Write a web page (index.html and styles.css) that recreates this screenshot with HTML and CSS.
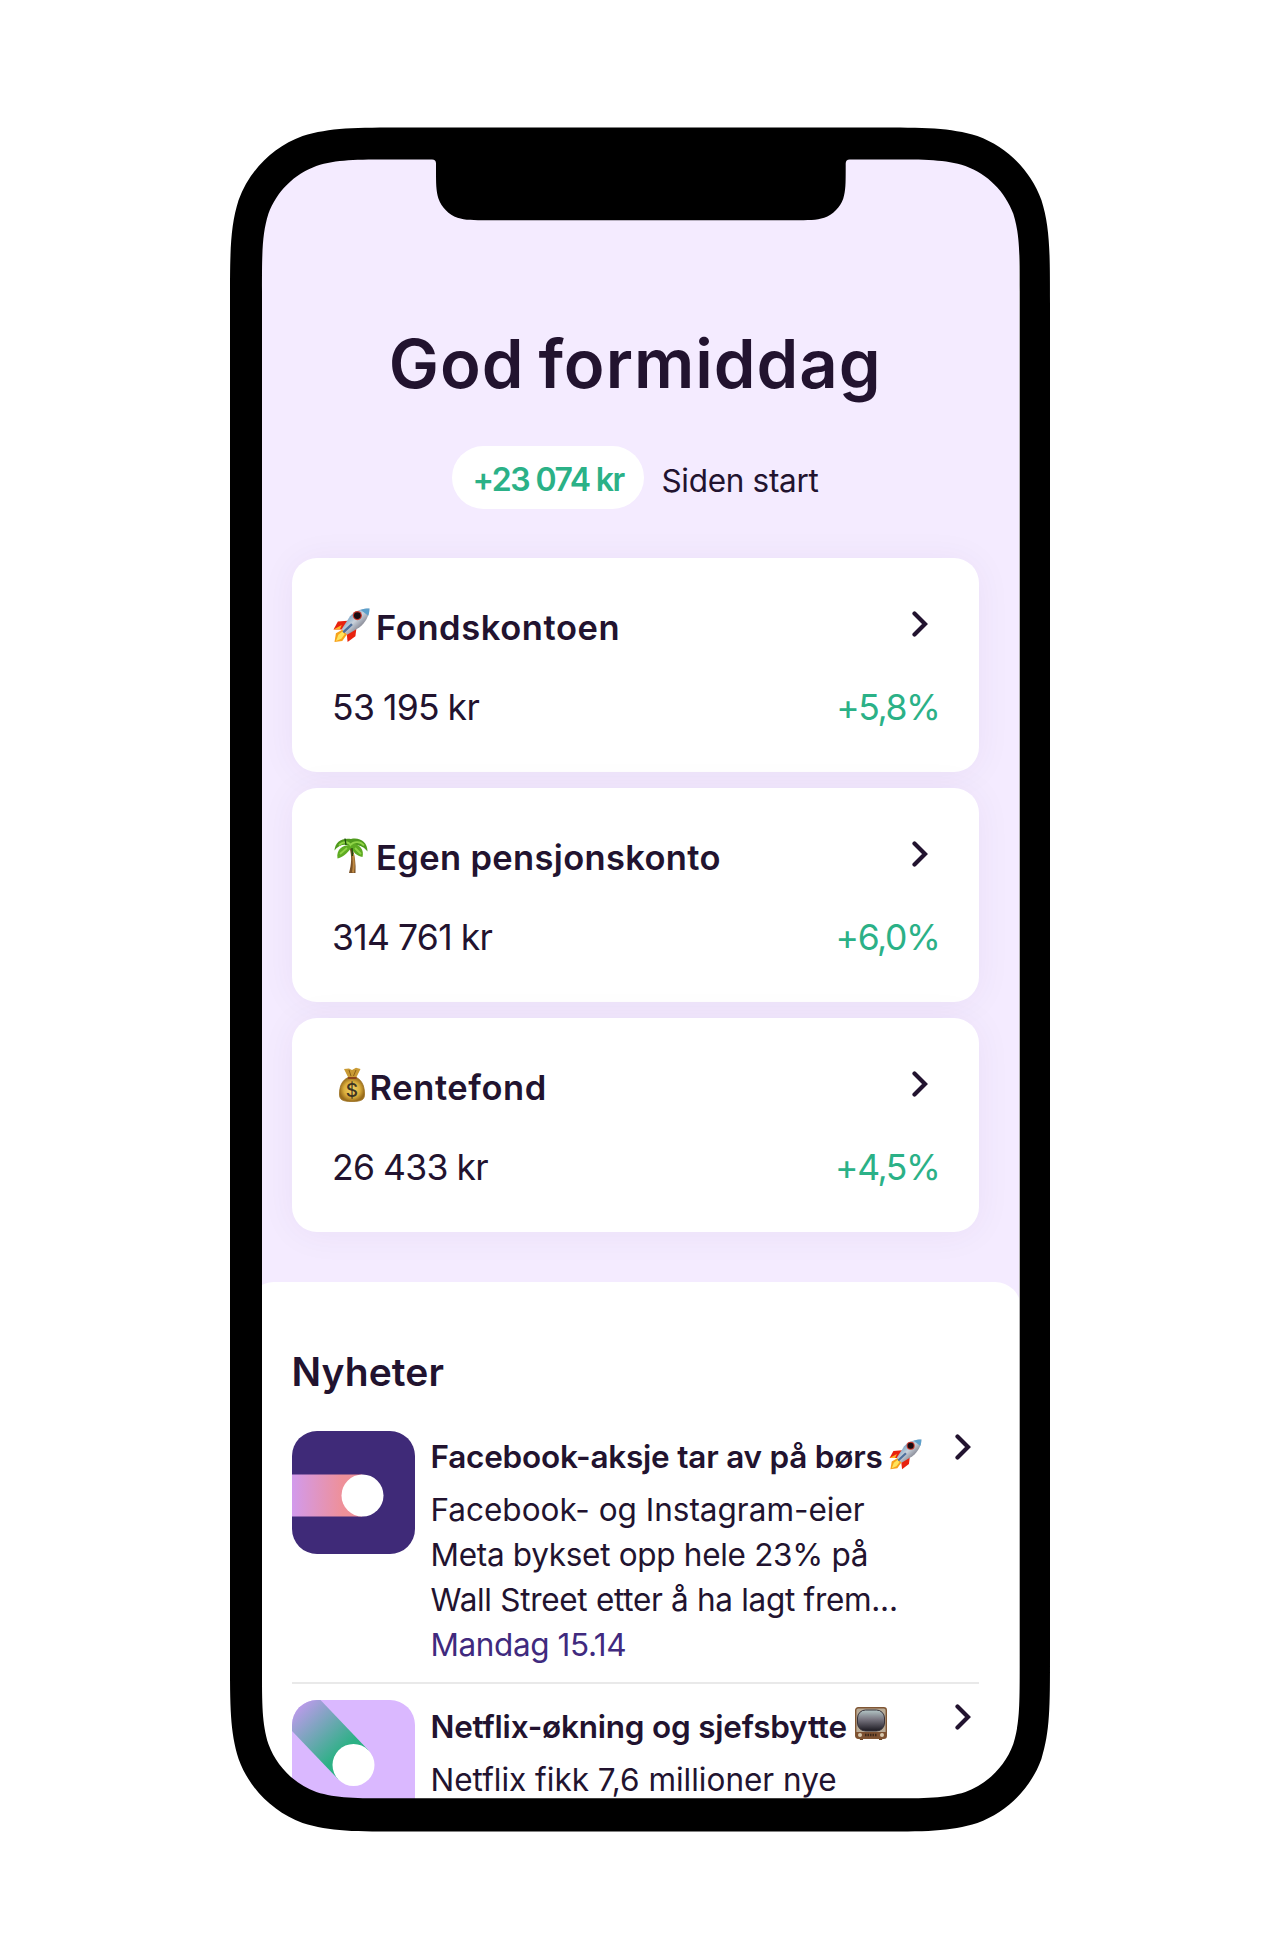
FILE: index.html
```html
<!DOCTYPE html>
<html lang="no">
<head>
  <meta charset="UTF-8">
  <title>God formiddag</title>
  <link rel="stylesheet" href="styles.css">
</head>
<body>
  <svg class="defs" width="0" height="0">
    <symbol id="chevron" viewBox="0 0 16 26">
      <path d="M2.5 2.5 L13 13 L2.5 23.5" fill="none" stroke="#22132f" stroke-width="4.2" stroke-linecap="round" stroke-linejoin="miter"/>
    </symbol>
    <symbol id="rocket" viewBox="0 0 38 36">
      <defs>
        <linearGradient id="hull" x1="0.2" y1="0.2" x2="0.8" y2="0.8">
          <stop offset="0" stop-color="#5f93bd"/>
          <stop offset="0.45" stop-color="#c9d2dc"/>
          <stop offset="1" stop-color="#6c6a76"/>
        </linearGradient>
      </defs>
      <path d="M15 13 L5 14 L0.5 22 L11 22 Z" fill="#e8220f"/>
      <path d="M24 21 L23 29 L15 35 L14 26 Z" fill="#e8220f"/>
      <path d="M0.5 22 L9 17.5 L7 22 Z" fill="#ffb42a"/>
      <path d="M10 22 L3 26 L1.5 35 L9.5 34 L14.5 27 Z" fill="#f7a21b"/>
      <path d="M10 24 L5.5 27.5 L3 34 L8.5 31.5 L12 27 Z" fill="#ffe45c"/>
      <path d="M37.5 0.5 C29 0.5 22 3 17.5 8.5 L9 21.5 L14.5 27.5 L27 20 C34 14.5 37 8 37.5 0.5 Z" fill="url(#hull)"/>
      <path d="M37.5 0.5 C34 0.5 31 1 28.5 2 L36.3 8 C37 5.5 37.5 3 37.5 0.5 Z" fill="#5da0cb"/>
      <path d="M19.5 16.5 L10.5 25" stroke="#4c6f9d" stroke-width="2.5"/>
      <circle cx="25" cy="7.8" r="4.7" fill="#c8362b"/>
      <circle cx="25" cy="7.8" r="3.5" fill="#170a12"/>
    </symbol>
  </svg>

  <div class="phone">
    <div class="screen">
      <main class="hero">
        <h1>God formiddag</h1>
        <div class="summary">
          <span class="pill">+23 074 kr</span>
          <span class="since">Siden start</span>
        </div>

        <div class="accounts">
          <div class="card">
            <div class="card-top">
              <h2><svg class="rocket"><use href="#rocket"/></svg>Fondskontoen</h2>
              <svg class="chevron"><use href="#chevron"/></svg>
            </div>
            <div class="card-bottom">
              <span class="amount">53 195 kr</span>
              <span class="percent">+5,8%</span>
            </div>
          </div>

          <div class="card">
            <div class="card-top">
              <h2 class="long">
                <svg class="palm" viewBox="0 0 34 37">
                  <path d="M18 10 C21 18 22 27 21.5 36 L15 36 C17.5 27 18 19 15.5 11 Z" fill="#7a5126"/>
                  <path d="M19 17 C20 24 20 30 19 35.5" fill="none" stroke="#c08a42" stroke-width="2"/>
                  <path d="M17 11 C14 6 5 7 0.5 13.5 C1 5 8 0.5 17 2 C26 0 33.5 5 33.5 14.5 C29 8 20 6 17 11 Z" fill="#4f9a1d"/>
                  <path d="M16 8 C9 8 2 12 3.500 21.500 C8 20.500 13.500 16.500 17 11 C19 15 23 19 28.500 20 C30.500 13 26 7 17 6 Z" fill="#5eab22"/>
                  <path d="M5 8.5 C9 3.5 15 5 16.5 8 C20 3.5 27 4.5 30 8.5 M6 17 L13 11 M21 11 L27 17" fill="none" stroke="#8fd447" stroke-width="1.8"/>
                  <path d="M11 1.500 L12 8 M18 11 L18.500 19" stroke="#1d4a0c" stroke-width="1.3"/>
                </svg>Egen pensjonskonto
              </h2>
              <svg class="chevron"><use href="#chevron"/></svg>
            </div>
            <div class="card-bottom">
              <span class="amount">314 761 kr</span>
              <span class="percent">+6,0%</span>
            </div>
          </div>

          <div class="card">
            <div class="card-top">
              <h2>
                <svg class="bag" viewBox="0 0 26 35">
                  <defs>
                    <radialGradient id="gold">
                      <stop offset="0" stop-color="#f5d768"/>
                      <stop offset="0.65" stop-color="#d9ad3c"/>
                      <stop offset="1" stop-color="#9a6d1c"/>
                    </radialGradient>
                  </defs>
                  <path d="M5 2 L10 1.5 L13 3 L17 0.8 L21.5 2 L17 11 L9.5 11 Z" fill="#c99a34"/>
                  <path d="M10 3 L12 9 M17 3 L14.5 9" stroke="#8a5f18" stroke-width="1"/>
                  <path d="M9 10.5 C3 13.5 0.5 19 0.5 27 C0.5 32.5 3 34.5 13 34.5 C23 34.5 25.5 32.5 25.5 27 C25.5 19 23 13.5 17.5 10.5 Z" fill="url(#gold)" stroke="#9a6d1c" stroke-width="0.8"/>
                  <path d="M9 11 H17.5" stroke="#8c3f1c" stroke-width="1.8"/>
                  <text class="dollar" x="13" y="29.5">$</text>
                </svg>Rentefond
              </h2>
              <svg class="chevron"><use href="#chevron"/></svg>
            </div>
            <div class="card-bottom">
              <span class="amount">26 433 kr</span>
              <span class="percent">+4,5%</span>
            </div>
          </div>
        </div>
      </main>

      <section class="news">
        <h2>Nyheter</h2>

        <article class="item">
          <svg class="thumb" viewBox="0 0 123 123">
            <defs>
              <linearGradient id="pink">
                <stop offset="0" stop-color="#d29aec"/>
                <stop offset="0.72" stop-color="#ee9099"/>
              </linearGradient>
            </defs>
            <rect width="123" height="123" fill="#3f2a78"/>
            <rect y="43.5" width="70" height="42" fill="url(#pink)"/>
            <circle cx="70.5" cy="64.5" r="21" fill="#fff"/>
          </svg>
          <div class="text">
            <h3>Facebook-aksje tar av på børs<svg class="rocket"><use href="#rocket"/></svg></h3>
            <p>
              Facebook- og Instagram-eier<br>
              <span class="tight">Meta bykset opp hele 23% på</span><br>
              <span class="tight">Wall Street etter å ha lagt frem...</span>
            </p>
            <time>Mandag 15.14</time>
          </div>
          <svg class="chevron"><use href="#chevron"/></svg>
        </article>

        <article class="item">
          <svg class="thumb" viewBox="0 0 123 123">
            <defs>
              <linearGradient id="green" gradientUnits="userSpaceOnUse" x1="8" y1="8" x2="50" y2="52">
                <stop offset="0" stop-color="#b59ce6"/>
                <stop offset="1" stop-color="#2cb185"/>
              </linearGradient>
            </defs>
            <rect width="123" height="123" fill="#dab8ff"/>
            <path d="M0 0 H28.5 L76.7 50.5 L46.4 79.5 L0 31 Z" fill="url(#green)"/>
            <circle cx="61.5" cy="65" r="21" fill="#fff"/>
          </svg>
          <div class="text">
            <h3>Netflix-økning og sjefsbytte<svg class="tv" viewBox="0 0 32 33">
              <defs>
                <linearGradient id="glass" x1="0" y1="0" x2="0" y2="1">
                  <stop offset="0" stop-color="#b4c6c6"/>
                  <stop offset="0.45" stop-color="#77747f"/>
                  <stop offset="1" stop-color="#1c1a22"/>
                </linearGradient>
              </defs>
              <path d="M4 30 H8 V33 H5 Z M24 30 H28 L27 33 H24 Z" fill="#6b4526"/>
              <rect x="0.7" y="0.7" width="30.6" height="30.6" rx="2.5" fill="#b9ab97" stroke="#805634" stroke-width="1.4"/>
              <rect x="1" y="25" width="30" height="6" fill="#7d5131"/>
              <rect x="2.5" y="3" width="27" height="21" rx="8" fill="url(#glass)" stroke="#37333b" stroke-width="1"/>
              <circle cx="5" cy="28" r="2" fill="#d8c9ae"/>
              <circle cx="27" cy="28" r="2" fill="#d8c9ae"/>
              <path d="M10 28 H22" stroke="#3d281a" stroke-width="2.5" stroke-dasharray="1.5 1"/>
            </svg></h3>
            <p>Netflix fikk 7,6 millioner nye</p>
          </div>
          <svg class="chevron"><use href="#chevron"/></svg>
        </article>
      </section>
    </div>

    <!-- frame with notch, sits on top of the screen -->
    <svg class="frame" viewBox="0 0 820 1705">
      <path fill-rule="evenodd" d="M0 176.3
        c0 -50.6 0 -75.9 8.6 -103.2 c10.8 -29.7 34.3 -53.2 64 -64 c27.3 -8.6 52.6 -8.6 103.2 -8.6
        H644.2
        c50.6 0 75.9 0 103.2 8.6 c29.7 10.8 53.2 34.3 64 64 c8.6 27.3 8.6 52.6 8.6 103.2
        V1528.7
        c0 50.6 0 75.9 -8.6 103.2 c-10.8 29.7 -34.3 53.2 -64 64 c-27.3 8.6 -52.6 8.6 -103.2 8.6
        H175.8
        c-50.6 0 -75.9 0 -103.2 -8.6 c-29.7 -10.8 -53.2 -34.3 -64 -64 c-8.6 -27.3 -8.6 -52.6 -8.6 -103.2
        Z
        M32 164
        c0 -37.9 0 -56.8 6.4 -77.2 c8.1 -22.2 25.7 -39.8 47.9 -47.9 c20.4 -6.4 39.3 -6.4 77.2 -6.4
        H202 q4 0 4 4 V41.3
        c0 15 0 22.5 2.5 30.5 c3.2 8.8 10.2 15.8 19 19 c8 2.5 15.5 2.5 30.5 2.5
        H563.7
        c15 0 22.5 0 30.5 -2.5 c8.8 -3.2 15.8 -10.2 19 -19 c2.5 -8 2.5 -15.5 2.5 -30.5
        V36.5 q0 -4 4 -4 H658.2
        c37.9 0 56.8 0 77.2 6.4 c22.2 8.1 39.8 25.7 47.9 47.9 c6.4 20.4 6.4 39.3 6.4 77.2
        V1539.8
        c0 37.9 0 56.8 -6.4 77.2 c-8.1 22.2 -25.7 39.8 -47.9 47.9 c-20.4 6.4 -39.3 6.4 -77.2 6.4
        H163.5
        c-37.9 0 -56.8 0 -77.2 -6.4 c-22.2 -8.1 -39.8 -25.7 -47.9 -47.9 c-6.4 -20.4 -6.4 -39.3 -6.4 -77.2
        Z"/>
    </svg>
  </div>
</body>
</html>
```

FILE: styles.css
```css
* {
  box-sizing: border-box;
}
body {
  margin: 0;
  height: 1958px;
  background-color: #fff;
  color: #22132f;
  font-family: Inter, "Liberation Sans", sans-serif;
  overflow: hidden;
}
h1, h2, h3, p {
  margin: 0;
  font-weight: 600;
}
.defs {
  position: absolute;
}
.phone {
  position: relative;
  width: 820px;
  height: 1705px;
  margin: 127px 0 0 230px;
  padding: 31px;
}
.frame {
  position: absolute;
  top: 0;
  left: 0;
  width: 820px;
  height: 1705px;
}
.screen {
  height: 1642px;
  border-radius: 60px;
  background-color: #f4ebff;
  overflow: hidden;
}
.hero {
  padding: 165.5px 40px 50px 30.5px;
}
h1 {
  font-size: 67px;
  line-height: 80px;
  letter-spacing: 1px;
  word-spacing: -4px;
  text-align: center;
}
.summary {
  display: flex;
  justify-content: center;
  gap: 17px;
  height: 63.5px;
  margin-top: 42px;
}
.pill {
  width: 192.5px;
  border-radius: 32px;
  background-color: #fff;
  color: #2bb187;
  font-size: 32px;
  font-weight: 600;
  line-height: 68px;
  letter-spacing: -1.4px;
  word-spacing: -0.5px;
  text-align: center;
}
.since {
  font-size: 31.5px;
  line-height: 70px;
  letter-spacing: -0.3px;
}
.accounts {
  display: flex;
  flex-direction: column;
  gap: 16px;
  margin-top: 49px;
}
.card {
  height: 214px;
  padding: 48.5px 39.5px 0 40.5px;
  border-radius: 25px;
  background-color: #fff;
  box-shadow: 0 2px 36px rgba(70, 30, 110, 0.055);
}
.card-top {
  display: flex;
  justify-content: space-between;
  align-items: flex-start;
}
.card h2 {
  display: flex;
  font-size: 34.5px;
  line-height: 42px;
  letter-spacing: 0.6px;
}
.card h2.long {
  letter-spacing: 0.35px;
}
.chevron {
  flex: none;
  width: 16px;
  height: 26px;
}
.card .chevron {
  margin: 4.5px 12px 0 0;
}
.card .rocket {
  width: 37px;
  height: 35px;
  margin: 1px 6px 0 1px;
}
.palm {
  width: 34px;
  height: 37px;
  margin: 0 8px 0 2px;
}
.bag {
  width: 26px;
  height: 35px;
  margin: 0 5px 0 6.5px;
}
.dollar {
  font-size: 19px;
  font-weight: 500;
  letter-spacing: 0;
  text-anchor: middle;
  fill: #3d3423;
}
.card-bottom {
  display: flex;
  justify-content: space-between;
  margin-top: 37.5px;
  font-size: 35.5px;
  line-height: 44px;
}
.amount {
  letter-spacing: -0.7px;
  word-spacing: -0.5px;
}
.percent {
  color: #2bb187;
  letter-spacing: -1.4px;
}
.news {
  height: 600px;
  margin: 0 -2px 0 -13px;
  padding: 66px 42.5px 0 43.5px;
  border-radius: 26px 26px 0 0;
  background-color: #fff;
}
.news h2 {
  margin-bottom: 34.5px;
  font-size: 39px;
  line-height: 48px;
  letter-spacing: 0.1px;
}
.item {
  display: flex;
  height: 251px;
}
.item + .item {
  padding-top: 16.5px;
  border-top: 2px solid #e9e9e9;
}
.thumb {
  flex: none;
  width: 123px;
  height: 123px;
  border-radius: 25px;
}
.text {
  flex: 1;
  padding: 3.5px 0 0 16px;
  font-size: 31.5px;
  line-height: 45px;
  white-space: nowrap;
}
.text h3 {
  display: flex;
  margin-bottom: 8px;
  font-size: 31.5px;
  letter-spacing: -0.22px;
}
.text p {
  font-weight: 400;
}
.tight {
  letter-spacing: -0.3px;
}
.text time {
  color: #402a7e;
  letter-spacing: -0.4px;
}
.text .rocket {
  width: 33px;
  height: 31px;
  margin: 5px 0 0 6px;
}
.tv {
  width: 32px;
  height: 33px;
  margin: 3.5px 0 0 8.5px;
}
.item .chevron {
  margin: 3.5px 8px 0 0;
}
```
